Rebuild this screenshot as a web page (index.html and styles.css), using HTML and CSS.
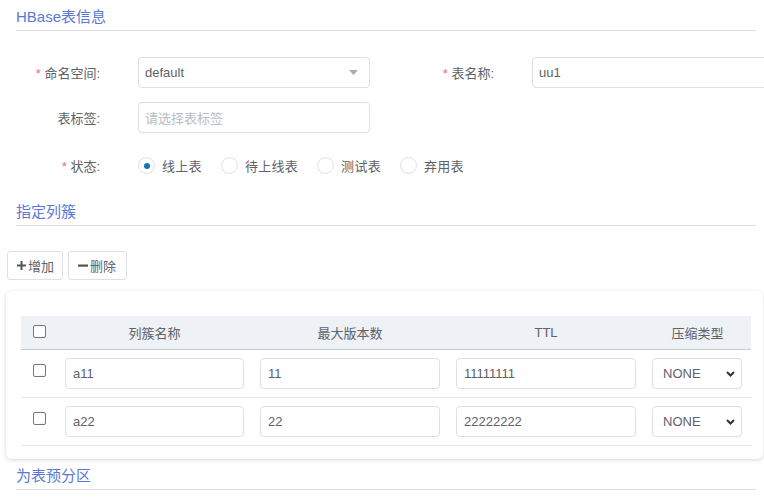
FILE: index.html
```html
<!DOCTYPE html>
<html lang="zh-CN">
<head>
<meta charset="utf-8">
<title>HBase表信息</title>
<link rel="stylesheet" href="styles.css">
</head>
<body>
<div class="page">
  <div class="section-title first">HBase表信息</div>

  <div class="form">
    <div class="form-row">
      <div class="item">
        <label class="label"><span class="req">*</span> 命名空间:</label>
        <div class="control select-box">
          <span class="val">default</span>
          <svg class="caret" width="9" height="5" viewBox="0 0 9 5"><path d="M0 0H9L4.5 5Z" fill="#a8abb2"/></svg>
        </div>
      </div>
      <div class="item item2">
        <label class="label"><span class="req">*</span> 表名称:</label>
        <div class="control input-box wide"><span class="val">uu1</span></div>
      </div>
    </div>

    <div class="form-row">
      <div class="item">
        <label class="label">表标签:</label>
        <div class="control input-box"><span class="placeholder">请选择表标签</span></div>
      </div>
    </div>

    <div class="form-row radio-row">
      <div class="item">
        <label class="label"><span class="req">*</span> 状态:</label>
        <div class="radios">
          <span class="radio checked"><span class="dot"></span></span><span class="radio-text">线上表</span>
          <span class="radio"></span><span class="radio-text">待上线表</span>
          <span class="radio"></span><span class="radio-text">测试表</span>
          <span class="radio"></span><span class="radio-text">弃用表</span>
        </div>
      </div>
    </div>
  </div>

  <div class="section-title second">指定列簇</div>

  <div class="buttons">
    <button class="btn"><svg width="9" height="9" viewBox="0 0 9 9"><path d="M3.5 0H5.5V3.5H9V5.5H5.5V9H3.5V5.5H0V3.5H3.5Z" fill="#555"/></svg>增加</button>
    <button class="btn"><svg width="10" height="9" viewBox="0 0 10 9"><rect x="0" y="3.5" width="10" height="2.2" fill="#555"/></svg>删除</button>
  </div>

  <div class="card">
    <table class="grid">
      <colgroup>
        <col class="c0"><col class="c1"><col class="c2"><col class="c3"><col class="c4">
      </colgroup>
      <thead>
        <tr>
          <th class="chk-cell"><span class="checkbox"></span></th>
          <th>列簇名称</th>
          <th>最大版本数</th>
          <th>TTL</th>
          <th>压缩类型</th>
        </tr>
      </thead>
      <tbody>
        <tr>
          <td class="chk-cell"><span class="checkbox"></span></td>
          <td><div class="cell-input">a11</div></td>
          <td><div class="cell-input">11</div></td>
          <td><div class="cell-input">11111111</div></td>
          <td><div class="cell-select"><span>NONE</span><svg width="9" height="6" viewBox="0 0 9 6"><path d="M1 1L4.5 4.5L8 1" fill="none" stroke="#333" stroke-width="2"/></svg></div></td>
        </tr>
        <tr>
          <td class="chk-cell"><span class="checkbox"></span></td>
          <td><div class="cell-input">a22</div></td>
          <td><div class="cell-input">22</div></td>
          <td><div class="cell-input">22222222</div></td>
          <td><div class="cell-select"><span>NONE</span><svg width="9" height="6" viewBox="0 0 9 6"><path d="M1 1L4.5 4.5L8 1" fill="none" stroke="#333" stroke-width="2"/></svg></div></td>
        </tr>
      </tbody>
    </table>
  </div>

  <div class="section-title third">为表预分区</div>
</div>
</body>
</html>
```

FILE: styles.css
```css
html, body {
  margin: 0;
  padding: 0;
  background: #fff;
}
body {
  font-family: "Liberation Sans", Arial, "Noto Sans CJK SC", sans-serif;
  font-size: 13px;
  color: #606266;
  width: 764px;
  height: 504px;
  overflow: hidden;
}
.page {
  display: flex;
  flex-direction: column;
}
.section-title {
  margin-left: 16px;
  width: 740px;
  font-size: 15px;
  line-height: 20px;
  color: #5b79d3;
  padding-bottom: 3px;
  border-bottom: 1px solid #dcdfe6;
}
.section-title.first { margin-top: 7px; }
.section-title.second { margin-top: 21px; }
.section-title.third { margin-top: 7px; }

.form {
  margin-top: 26px;
  margin-left: 16px;
  display: flex;
  flex-direction: column;
  gap: 14px;
}
.form-row {
  display: flex;
  height: 31px;
}
.radio-row { margin-top: 3px; }
.item {
  display: flex;
  align-items: center;
}
.item2 { margin-left: 40px; }
.label {
  width: 84px;
  text-align: right;
  margin-right: 38px;
  color: #606266;
  white-space: nowrap;
}
.req {
  color: #f56c6c;
}
.control {
  box-sizing: border-box;
  height: 31px;
  width: 232px;
  border: 1px solid #dcdfe6;
  border-radius: 4px;
  display: flex;
  align-items: center;
  padding: 0 7px 0 6px;
  background: #fff;
}
.control.wide { width: 260px; }
.val { color: #606266; flex: 1; }
.placeholder { color: #b8bcc4; }
.caret { margin-right: 4px; }

.radios {
  display: flex;
  align-items: center;
}
.radio {
  box-sizing: border-box;
  width: 17px;
  height: 17px;
  border: 1px solid #dcdfe6;
  border-radius: 50%;
  display: flex;
  align-items: center;
  justify-content: center;
  margin-right: 7px;
}
.dot {
  width: 6px;
  height: 6px;
  border-radius: 50%;
  background: #1476b0;
}
.radio-text {
  margin-right: 19px;
  color: #606266;
  letter-spacing: 0.3px;
}

.buttons {
  margin-top: 25px;
  margin-left: 7px;
  display: flex;
  gap: 5px;
}
.btn {
  box-sizing: border-box;
  height: 29px;
  padding: 0 8px 0 9px;
  border: 1px solid #dcdfe6;
  border-radius: 3px;
  background: #fff;
  font-family: inherit;
  font-size: 13px;
  color: #606266;
  display: flex;
  align-items: center;
  gap: 2px;
}
.btn:first-child { width: 56px; }
.btn:last-child { width: 59px; }

.card {
  margin-top: 11px;
  margin-left: 6px;
  width: 757px;
  box-sizing: border-box;
  padding: 25px 15px 13px 15px;
  background: #fff;
  border-radius: 6px;
  box-shadow: 0 1px 4px rgba(0, 0, 0, 0.16);
}
.grid {
  width: 730px;
  table-layout: fixed;
  border-collapse: collapse;
}
.c0 { width: 36px; }
.c1 { width: 195px; }
.c2 { width: 196px; }
.c3 { width: 196px; }
.c4 { width: 107px; }
.grid th {
  height: 33px;
  background: #eef1f6;
  font-weight: normal;
  color: #606266;
  text-align: center;
  border-bottom: 1px solid #c9ccd1;
  padding: 0;
}
.grid td {
  height: 47px;
  padding: 0 8px;
  border-bottom: 1px solid #e4e7ed;
  vertical-align: middle;
}
.grid td.chk-cell, .grid th.chk-cell {
  padding: 0 0 0 12px;
  text-align: left;
}
.checkbox {
  display: block;
  box-sizing: border-box;
  width: 13px;
  height: 13px;
  border: 1px solid #767676;
  border-radius: 2px;
  background: #fff;
}
.grid td .checkbox { margin-top: -6px; }
.grid th .checkbox { margin-top: -3px; }
.cell-input {
  box-sizing: border-box;
  height: 31px;
  border: 1px solid #dcdfe6;
  border-radius: 4px;
  padding: 0 7px;
  display: flex;
  align-items: center;
  color: #606266;
  font-size: 13px;
}
.cell-select {
  box-sizing: border-box;
  width: 90px;
  height: 31px;
  border: 1px solid #dcdfe6;
  border-radius: 4px;
  padding: 0 6px 0 10px;
  display: flex;
  align-items: center;
  justify-content: space-between;
  color: #606266;
}
```
